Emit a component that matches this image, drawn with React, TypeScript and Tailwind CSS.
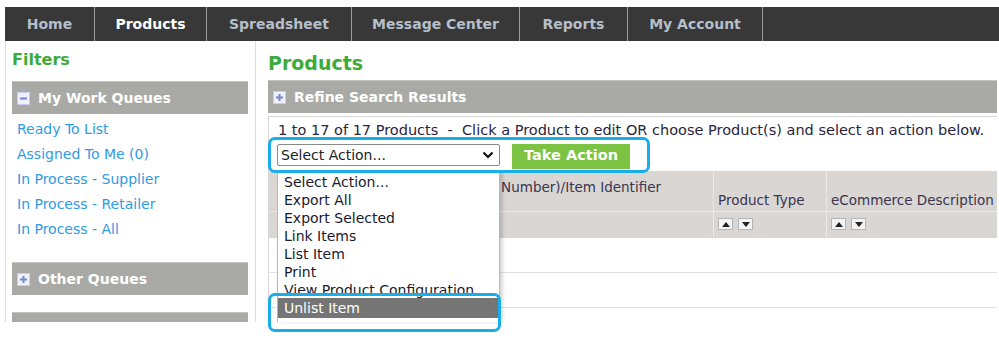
import React from 'react';

const TABS = [
  { label: 'Home', w: 'w-[90px]' },
  { label: 'Products', w: 'w-[112px]', active: true },
  { label: 'Spreadsheet', w: 'w-[145px]' },
  { label: 'Message Center', w: 'w-[168px]' },
  { label: 'Reports', w: 'w-[108px]' },
  { label: 'My Account', w: 'w-[135px]' },
];

const QUEUES = ['Ready To List', 'Assigned To Me (0)', 'In Process - Supplier', 'In Process - Retailer', 'In Process - All'];

const ACTIONS = ['Select Action...', 'Export All', 'Export Selected', 'Link Items', 'List Item', 'Print', 'View Product Configuration'];

function BoxIcon({ plus }: { plus?: boolean }) {
  return (
    <svg width="13" height="13" viewBox="0 0 13 13" className="shrink-0">
      <rect x="0.5" y="0.5" width="12" height="12" fill="#eef0fb" stroke="#c9cde8" />
      <rect x="3" y="5.5" width="7" height="2" fill="#7b86c4" />
      {plus && <rect x="5.5" y="3" width="2" height="7" fill="#7b86c4" />}
    </svg>
  );
}

function SectionBar({ title, plus }: { title: string; plus?: boolean }) {
  return (
    <div className="h-[33px] bg-[#a9aaa5] flex items-center gap-[8px] pl-[5px] border-t border-[#c4c5c1]">
      <BoxIcon plus={plus} />
      <span className="text-[14px] font-bold text-white">{title}</span>
    </div>
  );
}

function SortButtons() {
  return (
    <div className="flex gap-[5px]">
      {['M2 8 L6 3 L10 8 Z', 'M2 3 L10 3 L6 8 Z'].map(d => (
        <div key={d} className="w-[15px] h-[12px] bg-[#f4f4f4] border border-[#b5b5b5] flex items-center justify-center">
          <svg width="12" height="11" viewBox="0 0 12 11">
            <path d={d} fill="#222" />
          </svg>
        </div>
      ))}
    </div>
  );
}

export default function App() {
  return (
    <div className="w-[999px] h-[346px] bg-white relative overflow-hidden" style={{ fontFamily: '"DejaVu Sans", Verdana, sans-serif' }}>
      <div className="h-[322px] overflow-hidden pt-[7px] pl-[5px]">
        {/* Top nav */}
        <div className="h-[34px] bg-[#383838] flex items-center">
          {TABS.map(t => (
            <div key={t.label} className={`${t.w} h-full flex items-center border-r border-[#9d9d9d]`}>
              <span className={`w-full text-center text-[14px] font-bold ${t.active ? 'text-white' : 'text-[#b5bfca]'}`}>{t.label}</span>
            </div>
          ))}
        </div>

        <div className="flex h-[281px]">
          {/* Sidebar */}
          <div className="w-[251px] shrink-0 border-l border-r border-[#dcdcdc] pl-[6px] pr-[7px]">
            <div className="h-[40px] pt-[8px] text-[16px] font-bold text-[#3dab3a] leading-[22px]">Filters</div>
            <SectionBar title="My Work Queues" />
            <div className="pl-[5px] pt-[3px]">
              {QUEUES.map(q => (
                <div key={q} className="h-[25px] leading-[25px] text-[14px] text-[#2f9be2]">{q}</div>
              ))}
            </div>
            <div className="h-[20px]" />
            <SectionBar title="Other Queues" plus />
            <div className="h-[17px]" />
            <SectionBar title="" plus />
          </div>

          {/* Main */}
          <div className="flex-1 pl-[12px] pr-[2px]">
            <div className="h-[39px] pt-[10px] text-[19px] font-bold text-[#3dab3a] leading-[24px]">Products</div>
            <SectionBar title="Refine Search Results" plus />
            <div className="mt-[3px] border-t border-l border-[#d6d6d6]">
              <div className="h-[22px] pl-[9px] pt-[4px] text-[14.5px] text-[#2b2440] leading-[18px] whitespace-nowrap">
                1 to 17 of 17 Products &nbsp;- &nbsp;Click a Product to edit OR choose Product(s) and select an action below.
              </div>
              <div className="h-[32px] flex items-center pl-[8px] gap-[12px]">
                <div className="w-[223px] h-[22px] border border-[#8a8a8a] rounded-[2px] bg-white flex items-center justify-between pl-[3px] pr-[5px]">
                  <span className="text-[14px] text-[#222]">Select Action...</span>
                  <svg width="12" height="8" viewBox="0 0 12 8">
                    <path d="M1.5 1.5 L6 6 L10.5 1.5" fill="none" stroke="#111" strokeWidth="2.2" />
                  </svg>
                </div>
                <div className="w-[118px] h-[25px] mt-[2px] bg-[#7cc243] flex items-center justify-center text-[14.5px] font-bold text-white">Take Action</div>
              </div>

              {/* Table header */}
              <div className="flex bg-[#d9d6d4] text-[13.5px] text-[#3a3550]">
                <div className="w-[445px] border-r border-[#ebe9e8]">
                  <div className="h-[40px] flex justify-end pr-[52px] pt-[6px] whitespace-nowrap overflow-hidden">Item Number (Part Number)/Item Identifier</div>
                  <div className="h-[27px] border-t border-[#ebe9e8]" />
                </div>
                <div className="w-[113px] border-r border-[#ebe9e8]">
                  <div className="h-[40px] flex items-end pl-[4px] pb-[1px]">Product Type</div>
                  <div className="h-[27px] border-t border-[#ebe9e8] pl-[4px] pt-[6px]"><SortButtons /></div>
                </div>
                <div className="flex-1 overflow-hidden">
                  <div className="h-[40px] flex items-end pl-[4px] pb-[1px] whitespace-nowrap">eCommerce Description</div>
                  <div className="h-[27px] border-t border-[#ebe9e8] pl-[4px] pt-[6px]"><SortButtons /></div>
                </div>
              </div>

              {/* Rows */}
              <div className="h-[35px] border-b border-[#e2e2e2]" />
              <div className="h-[35px] border-b border-[#e2e2e2]" />
              <div className="h-[14px] pl-[12px] text-[13.5px] text-[#2f9be2] leading-[20px]">0002000020020</div>
            </div>
          </div>
        </div>
      </div>

      {/* Open dropdown list */}
      <div className="absolute left-[277px] top-[172px] w-[223px] h-[150px] bg-white border-l border-r border-[#b8b8b8] shadow-[3px_0_3px_rgba(0,0,0,0.15)] overflow-hidden">
        <div className="pl-[6px] pt-[1px]">
          {ACTIONS.map(a => (
            <div key={a} className="h-[18px] leading-[18px] text-[14px] text-[#1a1a2e] whitespace-nowrap">{a}</div>
          ))}
        </div>
        <div className="absolute left-0 right-0 top-[126px] h-[20px] bg-[#757575] pl-[6px] text-[14px] leading-[20px] text-white">Unlist Item</div>
      </div>

      {/* Highlight outlines */}
      <div className="absolute left-[268px] top-[137px] w-[382px] h-[36px] border-[3px] border-[#19aeea] rounded-[7px]" />
      <div className="absolute left-[268px] top-[293px] w-[233px] h-[39px] border-[3px] border-[#19aeea] rounded-[7px]" />
    </div>
  );
}
